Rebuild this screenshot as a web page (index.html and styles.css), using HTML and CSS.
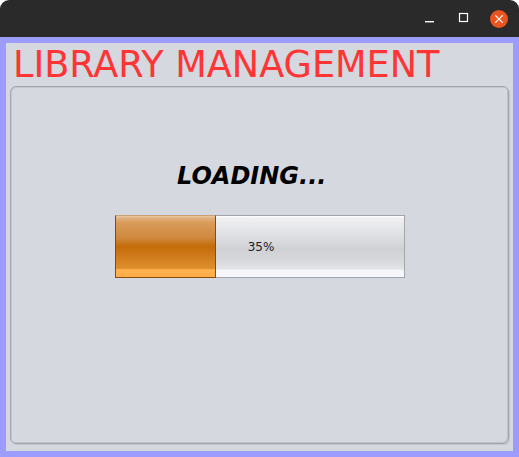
FILE: index.html
```html
<!DOCTYPE html>
<html>
<head>
<meta charset="utf-8">
<link rel="stylesheet" href="styles.css">
</head>
<body>
<div class="window">
  <div class="titlebar">
    <svg class="btn" width="20" height="20" viewBox="0 0 20 20"><rect x="5" y="12" width="9" height="1.4" fill="#fff"/></svg>
    <svg class="btn" width="20" height="20" viewBox="0 0 20 20"><rect x="5.5" y="4.5" width="8" height="8" fill="none" stroke="#fff" stroke-width="1.2"/></svg>
    <svg class="btn close" width="20" height="20" viewBox="0 0 20 20"><circle cx="10" cy="10" r="9" fill="#e95420"/><path d="M6.6 6.6 L13.4 13.4 M13.4 6.6 L6.6 13.4" stroke="#fff" stroke-width="1.3" stroke-linecap="round"/></svg>
  </div>
  <div class="frame">
    <div class="content">
      <h1 class="heading">LIBRARY MANAGEMENT</h1>
      <div class="panel">
        <div class="loading">LOADING...</div>
        <div class="bar">
          <div class="track">
            <div class="fill"></div>
            <div class="rest"></div>
          </div>
          <div class="label">35%</div>
        </div>
      </div>
    </div>
  </div>
</div>
</body>
</html>
```

FILE: styles.css
```css
html, body {
  margin: 0;
  padding: 0;
  background: #ffffff;
}
.window {
  width: 519px;
  height: 457px;
  display: flex;
  flex-direction: column;
  font-family: "DejaVu Sans", sans-serif;
}
.titlebar {
  height: 37px;
  flex: none;
  background: #2b2a2b;
  border-radius: 9px 9px 0 0;
  display: flex;
  align-items: center;
  justify-content: flex-end;
  padding-right: 10px;
  box-sizing: border-box;
}
.btn {
  display: block;
  margin-left: 14px;
}
.btn.close {
  margin-left: 15px;
}
.frame {
  flex: 1;
  background: #9c9cff;
  padding: 6px 6px 6px 6px;
  display: flex;
}
.content {
  flex: 1;
  background: #d5d8df;
  display: flex;
  flex-direction: column;
  padding: 0 4px 7px 4px;
}
.heading {
  margin: 0;
  padding-left: 3px;
  font-weight: normal;
  font-size: 36.6px;
  line-height: 43px;
  color: #ff3434;
  white-space: nowrap;
}
.panel {
  flex: 1;
  border: 1px solid #a3a6ad;
  border-radius: 6px;
  box-shadow: inset -1px -1px 0 #bfc2c8, inset 1px 1px 0 #c4c7cd, 1px 1px 0 #c2c5cb;
  display: flex;
  flex-direction: column;
  align-items: flex-start;
  padding-top: 75px;
}
.loading {
  margin-left: 166px;
  font-size: 24px;
  line-height: 28px;
  font-weight: bold;
  font-style: italic;
  color: #000;
}
.bar {
  margin-top: 25px;
  margin-left: 104px;
  width: 290px;
  height: 63px;
  display: grid;
}
.track {
  grid-area: 1 / 1;
  display: flex;
}
.fill {
  width: 101px;
  flex: none;
  box-sizing: border-box;
  border: 1px solid #8a4a10;
  border-top-color: #c9a27a;
  background: linear-gradient(to bottom,
    #eac8a2 0%, #e0ae7a 4%, #d99a58 12%, #d08a40 35%,
    #c46c08 50%, #cc7618 62%, #df8f2c 86%,
    #ffb24e 88%, #ffac46 100%);
}
.rest {
  flex: 1;
  box-sizing: border-box;
  border: 1px solid #a4a5aa;
  border-left: none;
  background: linear-gradient(to bottom,
    #ffffff 0%, #f0f0f2 4%, #e6e7ea 20%, #d6d7db 45%,
    #d0d1d5 55%, #d8d9dd 75%, #e4e5e9 87%,
    #f7f7fb 89%, #f8f8fc 100%);
}
.label {
  grid-area: 1 / 1;
  place-self: center;
  font-size: 12px;
  color: #1c1a28;
  padding-left: 2px;
}
```
